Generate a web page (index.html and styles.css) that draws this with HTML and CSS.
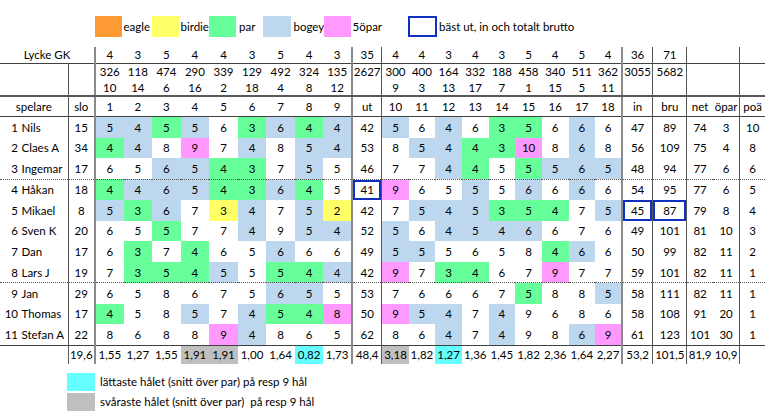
FILE: index.html
```html
<!DOCTYPE html>
<html lang="sv">
<head>
<meta charset="utf-8">
<title>Lycke GK</title>
<link rel="stylesheet" href="styles.css">
</head>
<body>
<div class="legend">
  <div class="sw eagle"></div><div class="lt w30">eagle</div>
  <div class="sw birdie"></div><div class="lt w30">birdie</div>
  <div class="sw par"></div><div class="lt w27 pl3">par</div>
  <div class="sw bogey w28"></div><div class="lt w33">bogey</div>
  <div class="sw opar"></div><div class="lt w57">5öpar</div>
  <div class="sw best w29"></div><div class="lt pl2">bäst ut, in och totalt brutto</div>
</div>

<table class="sheet">
  <colgroup>
    <col class="cn"><col class="cs">
    <col class="cf cf1"><col class="cf"><col class="cf"><col class="cf"><col class="cf"><col class="cf"><col class="cf"><col class="cf"><col class="cf">
    <col class="cu">
    <col class="cb cb1"><col class="cb"><col class="cb"><col class="cb"><col class="cb"><col class="cb"><col class="cb"><col class="cb"><col class="cb">
    <col class="ci"><col class="cr"><col class="cnet"><col class="co"><col class="cp">
  </colgroup>
  <tr class="r-par">
    <td colspan="2">Lycke GK</td>
    <td>4</td><td>3</td><td>5</td><td>4</td><td>4</td><td>3</td><td>5</td><td>4</td><td>3</td>
    <td>35</td>
    <td>4</td><td>4</td><td>3</td><td>4</td><td>3</td><td>5</td><td>4</td><td>5</td><td>4</td>
    <td>36</td><td>71</td><td></td><td></td><td></td>
  </tr>
  <tr class="r-len">
    <td></td><td></td>
    <td>326</td><td>118</td><td>474</td><td>290</td><td>339</td><td>129</td><td>492</td><td>324</td><td>135</td>
    <td>2627</td>
    <td>300</td><td>400</td><td>164</td><td>332</td><td>188</td><td>458</td><td>340</td><td>511</td><td>362</td>
    <td>3055</td><td>5682</td><td></td><td></td><td></td>
  </tr>
  <tr class="r-hcp">
    <td></td><td></td>
    <td>10</td><td>14</td><td>6</td><td>16</td><td>2</td><td>18</td><td>4</td><td>8</td><td>12</td>
    <td></td>
    <td>9</td><td>3</td><td>13</td><td>17</td><td>7</td><td>1</td><td>15</td><td>5</td><td>11</td>
    <td></td><td></td><td></td><td></td><td></td>
  </tr>
  <tr class="r-head">
    <td>spelare</td><td>slo</td>
    <td>1</td><td>2</td><td>3</td><td>4</td><td>5</td><td>6</td><td>7</td><td>8</td><td>9</td>
    <td>ut</td>
    <td>10</td><td>11</td><td>12</td><td>13</td><td>14</td><td>15</td><td>16</td><td>17</td><td>18</td>
    <td>in</td><td>bru</td><td>net</td><td>öpar</td><td>poä</td>
  </tr>

  <tr class="pl">
    <td class="name"><span class="num">1</span><span class="nm">Nils</span></td><td>15</td>
    <td class="b">5</td><td class="b">4</td><td class="p">5</td><td class="b">5</td><td>6</td><td class="p">3</td><td class="b">6</td><td class="p">4</td><td class="b">4</td>
    <td>42</td>
    <td class="b">5</td><td>6</td><td class="b">4</td><td>6</td><td class="p">3</td><td class="p">5</td><td>6</td><td class="b">6</td><td>6</td>
    <td>47</td><td>89</td><td>74</td><td>3</td><td>10</td>
  </tr>
  <tr class="pl">
    <td class="name"><span class="num">2</span><span class="nm">Claes A</span></td><td>34</td>
    <td class="p">4</td><td class="b">4</td><td>8</td><td class="m">9</td><td>7</td><td class="b">4</td><td>8</td><td class="b">5</td><td class="b">4</td>
    <td>53</td>
    <td>8</td><td class="b">5</td><td class="b">4</td><td class="p">4</td><td class="p">3</td><td class="m">10</td><td>8</td><td class="b">6</td><td>8</td>
    <td>56</td><td>109</td><td>75</td><td>4</td><td>8</td>
  </tr>
  <tr class="pl">
    <td class="name"><span class="num">3</span><span class="nm">Ingemar</span></td><td>17</td>
    <td>6</td><td>5</td><td class="b">6</td><td class="b">5</td><td class="p">4</td><td class="p">3</td><td>7</td><td class="b">5</td><td>5</td>
    <td>46</td>
    <td>7</td><td>7</td><td class="b">4</td><td class="p">4</td><td>5</td><td class="p">5</td><td class="b">5</td><td class="b">6</td><td class="b">5</td>
    <td>48</td><td>94</td><td>77</td><td>6</td><td>6</td>
  </tr>
  <tr class="pl dot">
    <td class="name"><span class="num">4</span><span class="nm">Håkan</span></td><td>18</td>
    <td class="p">4</td><td class="b">4</td><td class="b">6</td><td class="b">5</td><td class="p">4</td><td class="p">3</td><td class="b">6</td><td class="p">4</td><td>5</td>
    <td class="bx">41</td>
    <td class="m">9</td><td>6</td><td>5</td><td class="b">5</td><td>5</td><td class="b">6</td><td>6</td><td class="b">6</td><td>6</td>
    <td>54</td><td>95</td><td>77</td><td>6</td><td>5</td>
  </tr>
  <tr class="pl">
    <td class="name"><span class="num">5</span><span class="nm">Mikael</span></td><td>8</td>
    <td class="b">5</td><td class="p">3</td><td class="b">6</td><td>7</td><td class="y">3</td><td class="b">4</td><td>7</td><td class="b">5</td><td class="y">2</td>
    <td>42</td>
    <td>7</td><td class="b">5</td><td class="b">4</td><td class="b">5</td><td class="p">3</td><td class="p">5</td><td class="p">4</td><td>7</td><td class="b">5</td>
    <td class="bx">45</td><td class="bx">87</td><td>79</td><td>8</td><td>4</td>
  </tr>
  <tr class="pl">
    <td class="name"><span class="num">6</span><span class="nm">Sven K</span></td><td>20</td>
    <td>6</td><td>5</td><td class="p">5</td><td>7</td><td>7</td><td class="b">4</td><td>9</td><td class="b">5</td><td class="b">4</td>
    <td>52</td>
    <td class="b">5</td><td>6</td><td class="b">4</td><td class="b">5</td><td class="b">4</td><td class="b">6</td><td>6</td><td>7</td><td>6</td>
    <td>49</td><td>101</td><td>81</td><td>10</td><td>3</td>
  </tr>
  <tr class="pl">
    <td class="name"><span class="num">7</span><span class="nm">Dan</span></td><td>17</td>
    <td>6</td><td class="p">3</td><td>7</td><td class="p">4</td><td>6</td><td>5</td><td class="b">6</td><td>6</td><td>6</td>
    <td>49</td>
    <td class="b">5</td><td class="b">5</td><td>5</td><td>6</td><td>5</td><td>8</td><td class="p">4</td><td class="b">6</td><td>6</td>
    <td>50</td><td>99</td><td>82</td><td>11</td><td>2</td>
  </tr>
  <tr class="pl">
    <td class="name"><span class="num">8</span><span class="nm">Lars J</span></td><td>19</td>
    <td>7</td><td class="p">3</td><td class="p">5</td><td class="p">4</td><td class="b">5</td><td>5</td><td class="p">5</td><td class="p">4</td><td class="b">4</td>
    <td>42</td>
    <td class="m">9</td><td>7</td><td class="p">3</td><td class="p">4</td><td>6</td><td>7</td><td class="m">9</td><td>7</td><td>7</td>
    <td>59</td><td>101</td><td>82</td><td>11</td><td>1</td>
  </tr>
  <tr class="pl dot">
    <td class="name"><span class="num">9</span><span class="nm">Jan</span></td><td>29</td>
    <td>6</td><td>5</td><td>8</td><td>6</td><td>7</td><td>5</td><td class="b">6</td><td class="b">5</td><td>5</td>
    <td>53</td>
    <td>7</td><td>6</td><td>6</td><td>6</td><td>7</td><td class="p">5</td><td>8</td><td>8</td><td class="b">5</td>
    <td>58</td><td>111</td><td>82</td><td>11</td><td>1</td>
  </tr>
  <tr class="pl">
    <td class="name"><span class="num">10</span><span class="nm">Thomas</span></td><td>17</td>
    <td class="p">4</td><td>5</td><td>8</td><td class="b">5</td><td>7</td><td class="b">4</td><td class="p">5</td><td class="p">4</td><td class="m">8</td>
    <td>50</td>
    <td class="m">9</td><td class="b">5</td><td class="b">4</td><td>7</td><td class="b">4</td><td>9</td><td>6</td><td>8</td><td>6</td>
    <td>58</td><td>108</td><td>91</td><td>20</td><td>1</td>
  </tr>
  <tr class="pl">
    <td class="name"><span class="num">11</span><span class="nm">Stefan A</span></td><td>22</td>
    <td>8</td><td>6</td><td>8</td><td>8</td><td class="m">9</td><td class="b">4</td><td>8</td><td>6</td><td>5</td>
    <td>62</td>
    <td>8</td><td>6</td><td class="b">4</td><td>7</td><td class="b">4</td><td>9</td><td>8</td><td class="b">6</td><td class="m">9</td>
    <td>61</td><td>123</td><td>101</td><td>30</td><td>1</td>
  </tr>
  <tr class="r-avg">
    <td></td><td>19,6</td>
    <td>1,55</td><td>1,27</td><td>1,55</td><td class="g">1,91</td><td class="g">1,91</td><td>1,00</td><td>1,64</td><td class="c">0,82</td><td>1,73</td>
    <td>48,4</td>
    <td class="g">3,18</td><td>1,82</td><td class="c">1,27</td><td>1,36</td><td>1,45</td><td>1,82</td><td>2,36</td><td>1,64</td><td>2,27</td>
    <td>53,2</td><td>101,5</td><td>81,9</td><td>10,9</td><td></td>
  </tr>
</table>

<div class="notes">
  <div class="note"><div class="nsw cyan"></div><div class="ntx">lättaste hålet (snitt över par) på resp 9 hål</div></div>
  <div class="note"><div class="nsw grey"></div><div class="ntx">svåraste hålet (snitt över par)&nbsp; på resp 9 hål</div></div>
</div>
</body>
</html>
```

FILE: styles.css
```css
html, body {
  margin: 0;
  padding: 0;
  background: #ffffff;
  overflow: hidden;
}
body {
  width: 765px;
  height: 412px;
  font-family: Lato, "Liberation Sans", Arial, sans-serif;
  font-size: 11.5px;
  color: #000000;
}

/* top legend */
.legend {
  display: flex;
  align-items: center;
  height: 22px;
  margin-top: 15.5px;
  padding-left: 95px;
}
.sw {
  flex: none;
  width: 27px;
  height: 21.5px;
  box-sizing: border-box;
}
.lt {
  flex: none;
  box-sizing: border-box;
  padding-left: 1.5px;
  white-space: nowrap;
}
.w27 { width: 27px; }
.w28 { width: 28px; }
.w29 { width: 29px; }
.w30 { width: 30px; }
.w33 { width: 33px; padding-left: 2.5px; }
.w57 { width: 57px; }
.pl2 { padding-left: 2px; }
.pl3 { padding-left: 3px; }
.eagle { background: #ff9933; }
.birdie { background: #ffff66; }
.par { background: #66ff99; }
.bogey { background: #bdd7ee; }
.opar { background: #ff99ff; }
.best { border: 2px solid #1030c0; background: #ffffff; }

/* score sheet */
.sheet {
  margin-top: 9px;
  border-collapse: collapse;
  table-layout: fixed;
  width: 765px;
}
.sheet td {
  padding: 0;
  text-align: center;
  white-space: nowrap;
  line-height: 13px;
  overflow: visible;
}
.cn { width: 68px; }
.cs { width: 27px; border-left: 1px solid #595959; }
.cf { width: 28.556px; }
.cf1 { border-left: 2px solid #8a8a8a; }
.cu { width: 30px; border-left: 2px solid #8a8a8a; }
.cb { width: 26.667px; }
.cb1 { border-left: 1px solid #595959; }
.ci { width: 31px; border-left: 2px solid #8a8a8a; }
.cr { width: 34px; border-left: 1px solid #595959; }
.cnet { width: 26px; border-left: 1px solid #595959; }
.co { width: 27px; }
.cp { width: 25px; border-left: 1px solid #595959; }

.r-par { height: 16.6px; border-bottom: 1px solid #404040; }
.r-len { height: 16.7px; }
.r-hcp { height: 16.7px; border-bottom: 2px solid #595959; }
.r-head { height: 20.3px; border-bottom: 1px solid #404040; }
.pl { height: 20.75px; }
.dot { border-top: 1px dotted #555555; }
.r-avg { height: 19px; border-top: 1px solid #404040; }

.sheet td.name { text-align: left; }
.num {
  display: inline-block;
  width: 18px;
  text-align: right;
}
.nm { margin-left: 3.5px; }

.b { background: #bdd7ee; }
.p { background: #66ff99; }
.y { background: #ffff66; }
.m { background: #ff99ff; }
.g { background: #bfbfbf; }
.c { background: #66ffff; }
.bx { box-shadow: inset 0 0 0 2px #1030c0; }

/* bottom legend */
.notes {
  margin-top: 9px;
  padding-left: 67px;
  display: flex;
  flex-direction: column;
  gap: 2.5px;
}
.note {
  display: flex;
  align-items: center;
  height: 17.5px;
}
.nsw {
  flex: none;
  width: 27.5px;
  height: 17.5px;
}
.cyan { background: #66ffff; }
.grey { background: #bfbfbf; }
.ntx {
  margin-left: 5.5px;
  white-space: nowrap;
}
```
